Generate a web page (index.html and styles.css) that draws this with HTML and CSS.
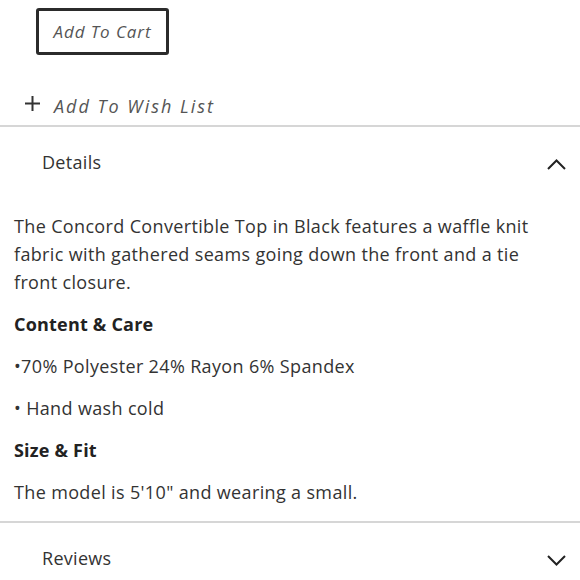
FILE: index.html
```html
<!DOCTYPE html>
<html>
<head>
<meta charset="utf-8">
<link rel="stylesheet" href="styles.css">
</head>
<body>
<div class="page">
  <div class="cart-wrap">
    <button class="cart-btn">Add To Cart</button>
  </div>
  <div class="wish">
    <svg class="plus" width="15" height="15" viewBox="0 0 15 15"><path d="M7.5 0 V15 M0 7.5 H15" stroke="#333" stroke-width="2"/></svg>
    <span class="wish-text">Add To Wish List</span>
  </div>
  <div class="section">
    <div class="section-head">
      <span class="section-title">Details</span>
      <svg class="chev" width="19" height="11" viewBox="0 0 19 11"><path d="M1 10 L9.5 1.5 L18 10" fill="none" stroke="#222" stroke-width="2"/></svg>
    </div>
    <div class="section-body">
      <p>The Concord Convertible Top in Black features a waffle knit fabric with gathered seams going down the front and a tie front closure.</p>
      <p class="bold">Content &amp; Care</p>
      <p>•70% Polyester 24% Rayon 6% Spandex</p>
      <p>• Hand wash cold</p>
      <p class="bold">Size &amp; Fit</p>
      <p>The model is 5'10" and wearing a small.</p>
    </div>
  </div>
  <div class="section">
    <div class="section-head">
      <span class="section-title">Reviews</span>
      <svg class="chev" width="19" height="11" viewBox="0 0 19 11"><path d="M1 1 L9.5 9.5 L18 1" fill="none" stroke="#222" stroke-width="2"/></svg>
    </div>
  </div>
</div>
</body>
</html>
```

FILE: styles.css
```css
html, body {
  margin: 0;
  padding: 0;
  background: #fff;
}
body {
  font-family: "Open Sans", Lato, sans-serif;
  color: #333;
}
.page {
  width: 580px;
  overflow: hidden;
}
.cart-wrap {
  padding: 8px 0 0 36px;
}
.cart-btn {
  width: 133px;
  height: 47px;
  border: 3px solid #2b2b2b;
  border-radius: 3px;
  background: #fff;
  font-family: "Open Sans", sans-serif;
  font-style: italic;
  font-size: 17px;
  color: #555;
  padding: 0;
  letter-spacing: 0.9px;
}
.wish {
  display: flex;
  align-items: center;
  height: 28px;
  margin-top: 37px;
  padding-left: 25px;
  padding-bottom: 5px;
  border-bottom: 2px solid #d6d6d6;
}
.plus {
  margin-right: 14px;
  margin-top: -6px;
}
.wish-text {
  font-style: italic;
  font-size: 18px;
  letter-spacing: 2px;
  color: #555;
}
.section {
  border-bottom: 2px solid #d6d6d6;
}
.section:last-child {
  border-bottom: none;
}
.section-head {
  display: flex;
  justify-content: space-between;
  align-items: center;
  height: 70px;
  padding: 0 14px 0 42px;
}
.section-title {
  font-size: 18px;
  color: #333;
  letter-spacing: 0.3px;
}
.chev {
  margin-top: 4px;
}
.section-body {
  padding: 15px 26px 1px 14px;
}
.section-body p {
  margin: 0 0 14px 0;
  font-size: 18px;
  line-height: 28px;
  color: #333;
  letter-spacing: 0.35px;
}
.section-body p.bold {
  font-weight: 700;
  color: #222;
  letter-spacing: 0.2px;
}
```
